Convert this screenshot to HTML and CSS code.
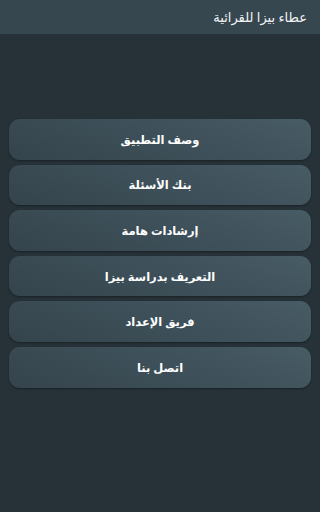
FILE: index.html
```html
<!DOCTYPE html>
<html lang="ar" dir="rtl">
<head>
<meta charset="utf-8">
<meta name="viewport" content="width=device-width, initial-scale=1">
<link rel="stylesheet" href="styles.css">
</head>
<body>
<div class="app">
  <header class="bar"><span class="title">عطاء بيزا للقرائية</span></header>
  <main class="menu">
    <div class="btn">وصف التطبيق</div>
    <div class="btn">بنك الأسئلة</div>
    <div class="btn">إرشادات هامة</div>
    <div class="btn">التعريف بدراسة بيزا</div>
    <div class="btn">فريق الإعداد</div>
    <div class="btn">اتصل بنا</div>
  </main>
</div>
</body>
</html>
```

FILE: styles.css
```css
html, body {
  margin: 0;
  padding: 0;
  background: #263238;
}
body {
  font-family: "Noto Sans", "DejaVu Sans", sans-serif;
  color: #ffffff;
}
.app {
  min-height: 100vh;
  display: flex;
  flex-direction: column;
  background: #263238;
}
.bar {
  height: 34px;
  background: #37474f;
  display: flex;
  align-items: center;
  padding: 0 13px;
  box-sizing: border-box;
}
.title {
  font-size: 13px;
  font-weight: 500;
  color: #f2f4f5;
}
.menu {
  display: flex;
  flex-direction: column;
  gap: 5px;
  padding: 85px 9px 0;
}
.btn {
  height: 40.6px;
  border-radius: 11px;
  background: linear-gradient(20deg, #34444c 0%, #3d4f58 50%, #485c66 100%);
  box-shadow: 0 1px 2px rgba(0,0,0,0.35);
  display: flex;
  align-items: center;
  justify-content: center;
  font-size: 11.5px;
  font-weight: 700;
  color: #ffffff;
}
```
